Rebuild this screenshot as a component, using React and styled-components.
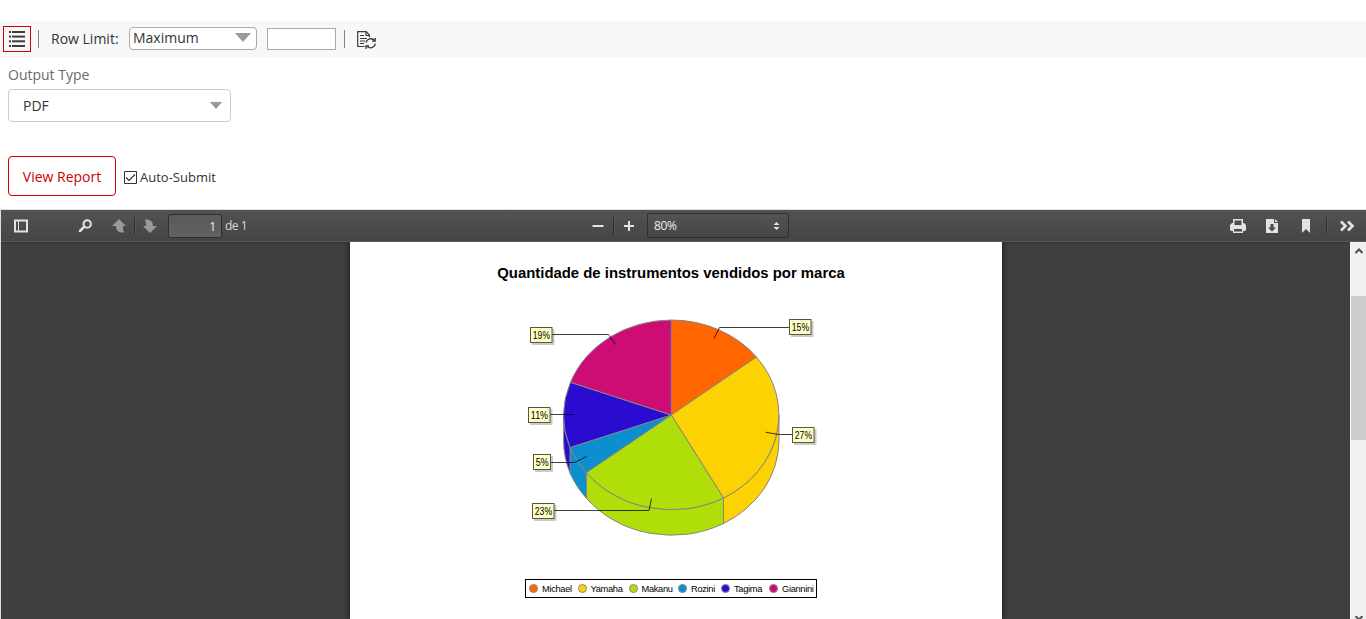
import React from "react";
import styled, { createGlobalStyle } from "styled-components";

const Global = createGlobalStyle`
  * { box-sizing: border-box; }
  body { margin: 0; background: #fff; overflow: hidden; font-family: "Open Sans", sans-serif; color: #333; }
  svg { display: block; flex: none; }
`;

const Screen = styled.div`
  display: flex;
  flex-direction: column;
  height: 619px;
  padding-top: 21px;
`;

const ReportBar = styled.div`
  display: flex;
  align-items: center;
  flex: none;
  height: 36px;
  padding: 0 3px;
  background: #f8f8f8;
  font-size: 14px;
`;

const MenuButton = styled.div`
  display: flex;
  align-items: center;
  justify-content: center;
  width: 28px;
  height: 26px;
  border: 1px solid #c00;
  margin-right: 7px;
`;

const BarDivider = styled.div`
  width: 1px;
  height: 18px;
  background: #85857d;
`;

const RowLabel = styled.span`
  width: 78px;
  margin-left: 12px;
  line-height: 20px;
`;

const LimitSelect = styled.div`
  display: flex;
  align-items: center;
  justify-content: space-between;
  width: 128px;
  height: 23px;
  margin-bottom: 1px;
  padding: 0 5px 2px 3px;
  border: 1px solid #aaa;
  border-radius: 4px;
  background: #fff;
  line-height: 18px;
`;

const LimitInput = styled.div`
  width: 69px;
  height: 22px;
  margin: 0 8px 0 10px;
  border: 1px solid #aaa;
  background: #fff;
`;

const Arrow = styled.span`
  border-style: solid;
  border-color: #999 transparent transparent;
  border-width: ${(p) => p.$h}px ${(p) => p.$w}px 0;
`;

const Form = styled.div`
  display: flex;
  flex-direction: column;
  flex: none;
  height: 152px;
  padding: 8px 8px 0;
`;

const FieldLabel = styled.span`
  font-size: 14px;
  line-height: 20px;
  color: #6a6a6a;
`;

const OutputSelect = styled.div`
  display: flex;
  align-items: center;
  justify-content: space-between;
  width: 223px;
  height: 33px;
  margin-top: 4px;
  padding: 0 8px 0 14px;
  border: 1px solid #ccc;
  border-radius: 4px;
  font-size: 14px;
`;

const SubmitRow = styled.div`
  display: flex;
  align-items: center;
  margin-top: 34px;
`;

const ViewButton = styled.div`
  width: 108px;
  height: 40px;
  margin-right: 8px;
  border: 1px solid #c00;
  border-radius: 4px;
  color: #c00;
  font-size: 14px;
  line-height: 40px;
  text-align: center;
`;

const AutoSubmit = styled.label`
  display: flex;
  align-items: center;
  gap: 3px;
  font-size: 13px;
  line-height: 20px;
  padding-top: 2px;
`;

const Viewer = styled.div`
  display: flex;
  flex-direction: column;
  flex: 1;
  min-height: 0;
  border-left: 1px solid #ddd;
  border-top: 1px solid #e0e0e0;
`;

const PdfBar = styled.div`
  display: flex;
  align-items: center;
  flex: none;
  height: 32px;
  padding: 0 11px 0 12px;
  background: linear-gradient(#525252, #454545);
  border-bottom: 1px solid #5b5b5b;
  color: #d9d9d9;
  font-size: 12px;
`;

const BarGroup = styled.div`
  display: flex;
  align-items: center;
  width: ${(p) => (p.$w ? p.$w + "px" : "auto")};
  margin-left: ${(p) => (p.$push ? "auto" : 0)};
`;

const Tool = styled.span`
  display: flex;
  width: 16px;
  height: 16px;
  margin-left: ${(p) => p.$gap || 0}px;
`;

const PdfDivider = styled.span`
  width: 2px;
  height: 17px;
  margin-left: ${(p) => p.$gap}px;
  background: #2b2b2b;
  border-right: 1px solid #595959;
`;

const PageInput = styled.span`
  width: 54px;
  height: 24px;
  margin: 0 3px 0 10px;
  padding-right: 5px;
  border: 1px solid #303030;
  border-radius: 2px;
  background: linear-gradient(#5a5a5a, #626262);
  line-height: 23px;
  text-align: right;
  color: #f0f0f0;
`;

const PageCount = styled.span`
  letter-spacing: -0.5px;
`;

const ZoomSelect = styled.span`
  display: flex;
  align-items: center;
  justify-content: space-between;
  width: 142px;
  height: 25px;
  margin-left: 10px;
  padding: 0 8px 0 6px;
  border: 1px solid #303030;
  border-radius: 2px;
  background: linear-gradient(#535353, #464646);
  color: #eee;
  letter-spacing: -0.4px;
`;

const Canvas = styled.div`
  display: flex;
  flex: 1;
  min-height: 0;
  background: #3f3f3f;
`;

const PageArea = styled.div`
  flex: 1;
  padding-left: 349px;
  box-shadow: inset 0 1px 1px #333;
`;

const Paper = styled.div`
  display: flex;
  flex-direction: column;
  align-items: center;
  width: 652px;
  height: 100%;
  padding-right: 10px;
  background: #fff;
  box-shadow: 0 0 7px rgba(0, 0, 0, 0.7);
  clip-path: inset(0 -9px);
  font-family: "Liberation Sans", Arial, sans-serif;
  color: #000;
`;

const ChartTitle = styled.h1`
  margin: 21px 0 0;
  font-size: 14.9px;
  line-height: 20px;
  font-weight: 700;
  white-space: nowrap;
`;

const ChartSpace = styled.div`
  padding: 29px 0 37px;
`;

const Legend = styled.div`
  display: flex;
  align-items: center;
  flex: none;
  width: 292px;
  height: 19px;
  padding-left: 3px;
  border: 1px solid #000;
  font-size: 9.3px;
`;

const LegendItem = styled.span`
  display: flex;
  align-items: center;
  gap: 4px;
  width: ${(p) => p.$w}px;
  flex: none;
  letter-spacing: -0.32px;
  white-space: nowrap;
`;

const Dot = styled.i`
  width: 9px;
  height: 9px;
  border: 1px solid #888;
  border-radius: 50%;
  background: ${(p) => p.$c};
`;

const Scrollbar = styled.div`
  display: flex;
  flex-direction: column;
  align-items: center;
  justify-content: space-between;
  width: 16px;
  padding-top: 6px;
  border-left: 1px solid #fafafa;
  background: #f0f0f0;
`;

const Thumb = styled.div`
  width: 100%;
  height: 144px;
  margin: 42px 0 auto;
  background: #cdcdcd;
`;

const slices = [
  { name: "Michael", color: "#ff6600", w: 48.5, d: "M671.3 415V320A107.7 95 0 0 1 756.5 357Z" },
  { name: "Yamaha", color: "#fcd202", w: 51, d: "M671.3 415L756.5 357A107.7 95 0 0 1 723.5 498Z" },
  { name: "Makanu", color: "#b0de09", w: 49.5, d: "M671.3 415L723.5 498A107.7 95 0 0 1 586.3 472.6Z" },
  { name: "Rozini", color: "#0d8ecf", w: 43, d: "M671.3 415L586.3 472.6A107.7 95 0 0 1 570 447.5Z" },
  { name: "Tagima", color: "#2a0cd0", w: 48, d: "M671.3 415L570 447.5A107.7 95 0 0 1 570.5 382.3Z" },
  { name: "Giannini", color: "#cd0d74", w: 48, d: "M671.3 415L570.5 382.3A107.7 95 0 0 1 671.3 320Z" },
];

const sides = [
  { color: "#fcd202", d: "M779 415V440.5A107.7 95 0 0 1 723.5 523.5V498A107.7 95 0 0 0 779 415Z" },
  { color: "#b0de09", d: "M723.5 498V523.5A107.7 95 0 0 1 586.3 498.1V472.6A107.7 95 0 0 0 723.5 498Z" },
  { color: "#0d8ecf", d: "M586.3 472.6V498.1A107.7 95 0 0 1 570 473V447.5A107.7 95 0 0 0 586.3 472.6Z" },
  { color: "#2a0cd0", d: "M570 447.5V473A107.7 95 0 0 1 563.6 440.5V415A107.7 95 0 0 0 570 447.5Z" },
];

const callouts = [
  { text: "15%", x: 789, y: 319, w: 21.5, line: "M714 338.5L719.5 327.5H789" },
  { text: "27%", x: 792, y: 427, w: 21.5, line: "M765.5 432.2L778.5 434.5H792" },
  { text: "19%", x: 530, y: 327, w: 21.5, line: "M552 334.5H608.5L615.5 344.5" },
  { text: "11%", x: 528, y: 407, w: 21.5, line: "M550 414.5H574.5" },
  { text: "5%", x: 533, y: 454, w: 17, line: "M550 462.5H574.5L586.5 456.5" },
  { text: "23%", x: 532, y: 503, w: 21.5, line: "M554 510.5H649L651.5 498.5" },
];

const PieChart = () => (
  <svg width="320" height="230" viewBox="511 312 320 230" fontFamily="Liberation Sans, Arial, sans-serif" fontSize="10">
    <g stroke="#858585" strokeLinejoin="round">
      {sides.map((s) => <path key={s.color} d={s.d} fill={s.color} />)}
      {slices.map((s) => <path key={s.name} d={s.d} fill={s.color} />)}
    </g>
    {callouts.map((c) => (
      <g key={c.text}>
        <rect x={c.x + 2} y={c.y + 2} width={c.w + 1} height="16" fill="#cbcbcb" />
        <path d={c.line} fill="none" stroke="#000" strokeOpacity=".75" />
        <rect x={c.x + 0.5} y={c.y + 0.5} width={c.w} height="15" fill="#ffffc4" stroke="#555548" />
        <text x={c.x + 0.7 + c.w / 2} y={c.y + 11.5} textAnchor="middle" textLength={c.w - 4.3} lengthAdjust="spacingAndGlyphs">{c.text}</text>
      </g>
    ))}
  </svg>
);

const PdfIcon = ({ children }) => (
  <svg width="16" height="16" viewBox="0 0 16 16" fill="#e2e2e2">{children}</svg>
);

export default function App() {
  return (
    <Screen>
      <Global />
      <ReportBar>
        <MenuButton>
          <svg width="16" height="16" viewBox="0 0 16 16" fill="#3c3c3c">
            {[0, 4.6, 9.3, 14].map((y) => (
              <g key={y}><rect y={y} width="2" height="2" /><rect x="3" y={y} width="13" height="2" /></g>
            ))}
          </svg>
        </MenuButton>
        <BarDivider />
        <RowLabel>Row Limit:</RowLabel>
        <LimitSelect>Maximum<Arrow $w={8} $h={9} /></LimitSelect>
        <LimitInput />
        <BarDivider />
        <Tool $gap={12}>
          <svg width="20" height="20" viewBox="0 0 20 20" fill="none" stroke="#3c3c3c" strokeWidth="1.2">
            <path d="M7.5 15.5H.7V.6h8.5L12.4 4V6.2M9 .6v3.9h3.4M3 4.5h4M3 7.5h7M3 10h5M3 12.5h4" />
            <path d="M9 11.5a5 5 0 0 1 8.8-1.8M18.2 7v3.2H15M18.4 12.7a5 5 0 0 1-8.8 2.2M9 18v-3.2h3.2" strokeWidth="1.3" />
          </svg>
        </Tool>
      </ReportBar>
      <Form>
        <FieldLabel>Output Type</FieldLabel>
        <OutputSelect>PDF<Arrow $w={6} $h={7} /></OutputSelect>
        <SubmitRow>
          <ViewButton>View Report</ViewButton>
          <AutoSubmit>
            <svg width="13" height="13" viewBox="0 0 13 13" fill="none" stroke="#333">
              <path d="M.5.5h12v12H.5z" /><path d="M2 6.5l3 3L11 3.5" strokeWidth="1.2" />
            </svg>
            Auto-Submit
          </AutoSubmit>
        </SubmitRow>
      </Form>
      <Viewer>
        <PdfBar>
          <BarGroup $w={576}>
            <Tool>
              <PdfIcon><path fillRule="evenodd" d="M1 1.5h14v13H1zM3 3.5v9h2v-9zm3 0v9h7v-9z" /></PdfIcon>
            </Tool>
            <Tool $gap={48}>
              <PdfIcon><path d="M6.8 9.2L3 13" stroke="#e2e2e2" strokeWidth="2.5" strokeLinecap="round" /><circle cx="10.2" cy="6" r="3.7" fill="none" stroke="#e2e2e2" strokeWidth="2.1" /></PdfIcon>
            </Tool>
            <Tool $gap={18}>
              <PdfIcon><path fill="#999" d="M8 1L15 8h-3c0 3 0 4.8 1.4 6.6C8 14.8 5 13 5 8H1z" /></PdfIcon>
            </Tool>
            <PdfDivider $gap={7} />
            <Tool $gap={6}>
              <PdfIcon><path fill="#999" d="M8 15L1 8h3c0-3 0-4.8-1.4-6.6C8 1.2 11 3 11 8h4z" /></PdfIcon>
            </Tool>
            <PageInput>1</PageInput>
            <PageCount>de 1</PageCount>
          </BarGroup>
          <BarGroup>
            <Tool><PdfIcon><path d="M3.5 7h11v2h-11z" /></PdfIcon></Tool>
            <PdfDivider $gap={8} />
            <Tool $gap={6}><PdfIcon><path d="M7 3h2v4h4v2H9v4H7V9H3V7H7z" /></PdfIcon></Tool>
            <ZoomSelect>
              80%
              <svg width="7" height="8" viewBox="0 0 7 8" fill="#e2e2e2"><path d="M3.5 0L6.5 3H.5zM3.5 8L.5 5h6z" /></svg>
            </ZoomSelect>
          </BarGroup>
          <BarGroup $push>
            <Tool>
              <PdfIcon><path fillRule="evenodd" d="M3 1h10v4h1l2 2v5l-1 1h-2v2H3v-2H1l-1-1V7l2-2h1zm1.5 1.5V7h7V2.5zM4 11v2.5h8V11z" /></PdfIcon>
            </Tool>
            <Tool $gap={18}>
              <PdfIcon><path fillRule="evenodd" d="M2 1h8v4h4v10H2zM6.5 6v3.5H4l4 4 4-4H9.5V6z" /><path d="M11 1l3 3h-3z" /></PdfIcon>
            </Tool>
            <Tool $gap={18}><PdfIcon><path d="M4 1h8v14l-4-4-4 4z" /></PdfIcon></Tool>
            <PdfDivider $gap={12} />
            <Tool $gap={11}>
              <PdfIcon><path d="M2 3.5L6.5 8 2 12.5M9 3.5L13.5 8 9 12.5" fill="none" stroke="#e2e2e2" strokeWidth="2.7" /></PdfIcon>
            </Tool>
          </BarGroup>
        </PdfBar>
        <Canvas>
          <PageArea>
            <Paper>
              <ChartTitle>Quantidade de instrumentos vendidos por marca</ChartTitle>
              <ChartSpace><PieChart /></ChartSpace>
              <Legend>
                {slices.map((s) => (
                  <LegendItem key={s.name} $w={s.w}><Dot $c={s.color} />{s.name}</LegendItem>
                ))}
              </Legend>
            </Paper>
          </PageArea>
          <Scrollbar>
            <svg width="8" height="6" viewBox="0 0 8 6" fill="none" stroke="#505050" strokeWidth="2"><path d="M.5 5L4 1.5 7.5 5" /></svg>
            <Thumb />
            <svg width="8" height="3" viewBox="0 0 8 3" fill="none" stroke="#505050" strokeWidth="2"><path d="M.5 0L4 3.5 7.5 0" /></svg>
          </Scrollbar>
        </Canvas>
      </Viewer>
    </Screen>
  );
}
